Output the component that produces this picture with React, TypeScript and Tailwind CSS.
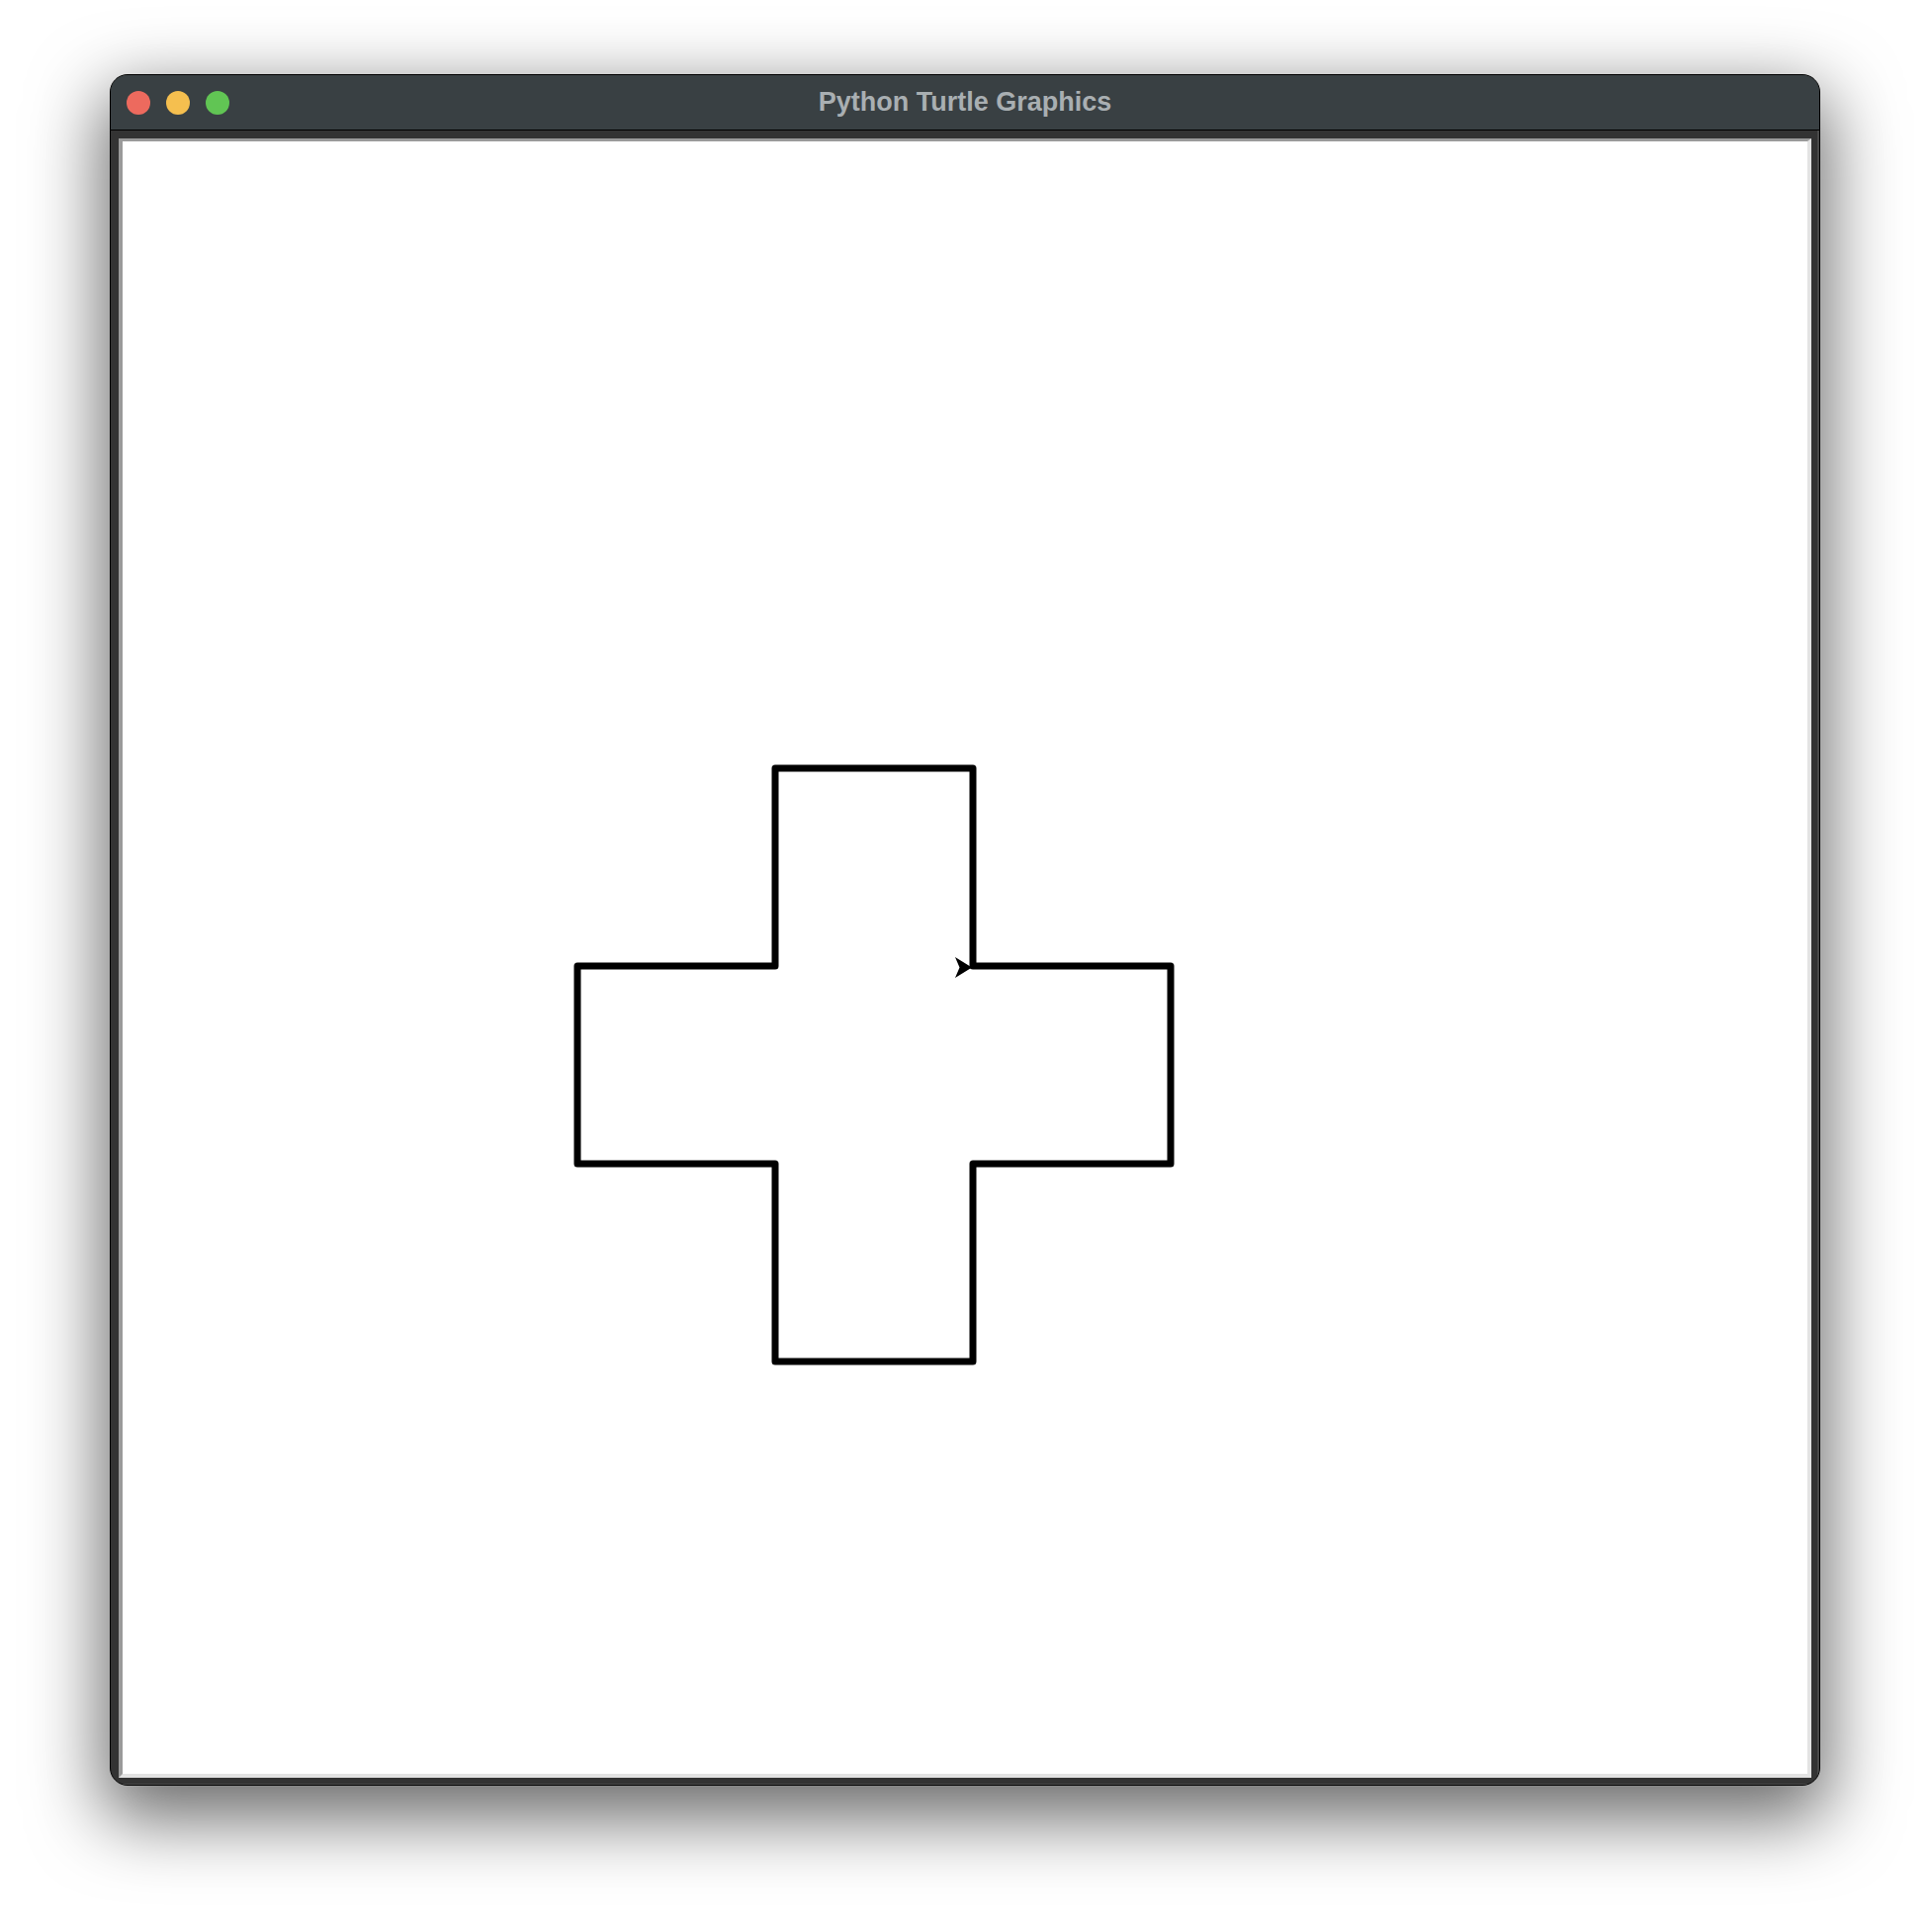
import React from 'react';

// Cross outline, in canvas coordinates (canvas origin at its top-left corner)
const crossPath =
    'M 660 834 L 660 634 L 860 634 L 860 834 L 1060 834 L 1060 1034 L 860 1034 L 860 1234 L 660 1234 L 660 1034 L 460 1034 L 460 834 Z';

const TrafficLights: React.FC = () => (
    <div className="absolute left-[16px] top-[16px] flex gap-[16px]">
        <div className="w-[24px] h-[24px] rounded-full bg-[#ed6a5e]" />
        <div className="w-[24px] h-[24px] rounded-full bg-[#f5bf4f]" />
        <div className="w-[24px] h-[24px] rounded-full bg-[#61c554]" />
    </div>
);

const TurtleCanvas: React.FC = () => (
    <div className="w-[1704px] h-[1651px] bg-white">
        <svg width="1704" height="1651" viewBox="0 0 1704 1651">
            <path d={crossPath} fill="none" stroke="#000" strokeWidth="7" strokeLinejoin="round" />
            {/* turtle arrow, heading east */}
            <polygon points="859,835.5 842,825 846.5,835.5 842,846" fill="#000" />
        </svg>
    </div>
);

export default function App() {
    return (
        <div className="w-[1952px] h-[1954px] bg-white pt-[75px] pl-[111px]">
            <div className="w-[1730px] h-[1731px] rounded-[18px] border border-black bg-[#333333] overflow-hidden flex flex-col shadow-[0_26px_72px_8px_rgba(0,0,0,0.58)]">
                {/* title bar */}
                <div className="relative h-[56px] shrink-0 bg-[#394043] border-b border-black flex items-center justify-center">
                    <TrafficLights />
                    <span className="text-[27px] font-bold text-[#a9afb2] leading-none pb-[1px] [font-family:'Liberation_Sans',Arial,sans-serif]">
                        Python Turtle Graphics
                    </span>
                </div>
                {/* tk frame with sunken canvas */}
                <div className="flex-1 pt-[8px] pl-[8px] pr-[8px] pb-[7px] shadow-[inset_-2px_-1px_0_#4a4a4a]">
                    <div className="border-t-[3px] border-l-[4px] border-r-[4px] border-b-[4px] border-t-[#9a9a9a] border-l-[#9a9a9a] border-r-[#e3e3e3] border-b-[#e3e3e3] w-fit">
                        <TurtleCanvas />
                    </div>
                </div>
            </div>
        </div>
    );
}
